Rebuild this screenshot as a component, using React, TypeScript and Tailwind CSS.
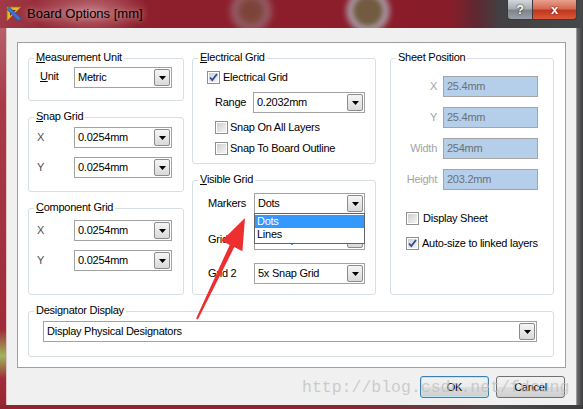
import React from "react";

function Tri() {
  return (
    <svg width="7" height="4" viewBox="0 0 7 4">
      <path d="M0 0H7L3.5 4Z" fill="#000" />
    </svg>
  );
}

function Combo({ value, className }: { value: string; className?: string }) {
  return (
    <div className={`flex h-[21px] items-stretch border border-[#a3a3a3] bg-white ${className ?? ""}`}>
      <div className="flex flex-1 items-center overflow-hidden whitespace-nowrap pl-[3px]">{value}</div>
      <div className="m-[1px] flex w-[16px] items-center justify-center rounded-[2px] border border-[#8c8c8c] bg-[linear-gradient(180deg,#f6f6f6,#d9d9d9)]">
        <Tri />
      </div>
    </div>
  );
}

function Check({ checked }: { checked?: boolean }) {
  return (
    <div className="flex h-[13px] w-[13px] shrink-0 items-center justify-center border border-[#8e8f8f] bg-white">
      <div className="relative h-[9px] w-[9px] bg-[linear-gradient(135deg,#cfcfcf,#f4f4f4)]">
        {checked && (
          <svg className="absolute left-[-1px] top-[-1px]" width="11" height="11" viewBox="0 0 11 11">
            <path d="M2 5.5L4.3 8L9 2" fill="none" stroke="#2b4c9c" strokeWidth="1.8" />
          </svg>
        )}
      </div>
    </div>
  );
}

function Group({
  title,
  className,
  children,
}: {
  title: React.ReactNode;
  className?: string;
  children?: React.ReactNode;
}) {
  return (
    <div className={`relative rounded-[3px] border border-[#d5dfe5] ${className ?? ""}`}>
      <div className="absolute left-[5px] top-[-8px] whitespace-nowrap bg-white px-[2px] leading-[13px]">{title}</div>
      {children}
    </div>
  );
}

function SheetRow({ label, value, className }: { label: string; value: string; className?: string }) {
  return (
    <div className={`flex items-center ${className ?? ""}`}>
      <div className="w-[46px] text-right text-[#a3a3a3]">{label}</div>
      <div className="ml-[6px] flex h-[21px] w-[95px] items-center border border-[#a5a5a5] bg-[#b5cfea] pl-[3px] text-[#6b6f75]">
        {value}
      </div>
    </div>
  );
}

export default function App() {
  return (
    <div className="relative h-[409px] w-[583px] overflow-hidden bg-[#8d1f2c] font-['Liberation_Sans',Arial,sans-serif] text-[11px] tracking-[-0.25px] text-black">
      {/* Title bar */}
      <div className="relative flex h-[28px] items-center overflow-hidden bg-[linear-gradient(90deg,#a03a46_0%,#93263383_12%,#8d1f2c_30%,#8c1d2a_60%,#891c29_77%,#5c2a31_82%,#414143_86%,#47484a_100%)]">
        <div className="absolute left-[30px] top-[-14px] h-[50px] w-[120px] rounded-full bg-[radial-gradient(closest-side,rgba(230,180,185,0.55),rgba(230,180,185,0))]" />
        <div className="absolute left-[228px] top-[-12px] h-[46px] w-[46px] rounded-full bg-[radial-gradient(closest-side,#6e6a48_50%,#a9b7c6_72%,rgba(169,183,198,0)_100%)] opacity-50 blur-[3px]" />
        <div className="absolute left-[343px] top-[-14px] h-[50px] w-[50px] rounded-full bg-[radial-gradient(closest-side,#6d6b46_50%,#b3c2d0_70%,rgba(179,194,208,0)_100%)] opacity-80 blur-[2px]" />
        <svg className="relative ml-[6px] shrink-0" width="16" height="16" viewBox="0 0 16 16">
          <path d="M1 1H15L1 15Z" fill="#e8b923" stroke="#9a6d10" strokeWidth="0.8" />
          <path d="M4 4H10L4 10Z" fill="#8d1f2c" />
          <path d="M1 3.5L3.5 1L15 12.5L12.5 15Z" fill="#3a77d0" stroke="#1f4c96" strokeWidth="0.6" />
        </svg>
        <span className="relative ml-[5px] text-[13px] tracking-normal [text-shadow:0_0_6px_rgba(255,255,255,0.6)]">
          Board Options [mm]
        </span>
        <div className="relative ml-auto mr-[6px] flex self-start">
          <div className="flex h-[20px] w-[26px] items-center justify-center rounded-bl-[4px] border border-t-0 border-[#3a3a3a] bg-[linear-gradient(180deg,#d4d8dc_0%,#a7adb3_45%,#7d848b_55%,#9aa1a8_100%)] text-[12px] font-bold text-white [text-shadow:0_0_2px_#000]">
            ?
          </div>
          <div className="flex h-[20px] w-[44px] items-center justify-center rounded-br-[4px] border border-l-0 border-t-0 border-[#3a3a3a] bg-[linear-gradient(180deg,#e8a08e_0%,#d66a52_45%,#c0381f_55%,#d9583a_100%)] text-[13px] font-bold text-white [text-shadow:0_0_2px_#300]">
            x
          </div>
        </div>
      </div>

      {/* Body row */}
      <div className="flex h-[377px]">
        <div className="w-[6px] bg-[linear-gradient(180deg,#b8606b_0%,#a83a47_20%,#a02b39_80%,#9fb45c_87%,#a02b39_93%,#9a2634_100%)]" />
        <div className="flex flex-1 flex-col border-l border-[#d8c8c8] bg-[#f0f0f0] pl-[10px] pr-[10px] pt-[14px]">
          {/* Panel */}
          <div className="h-[326px] border border-[#a0a0a0] bg-white pl-[10px] pt-[15px]">
            <div className="flex items-start">
              {/* Left column */}
              <div className="flex w-[156px] flex-col">
                <Group
                  className="h-[43px]"
                  title={
                    <>
                      <u>M</u>easurement Unit
                    </>
                  }
                >
                  <div className="flex items-center pl-[11px] pt-[8px]">
                    <div className="w-[34px] pb-[2px]">
                      <u>U</u>nit
                    </div>
                    <Combo value="Metric" className="w-[98px]" />
                  </div>
                </Group>
                <Group
                  className="mt-[16px] h-[75px]"
                  title={
                    <>
                      <u>S</u>nap Grid
                    </>
                  }
                >
                  <div className="flex items-center pl-[8px] pt-[9px]">
                    <div className="w-[37px] text-[#505050]">X</div>
                    <Combo value="0.0254mm" className="w-[98px]" />
                  </div>
                  <div className="mt-[9px] flex items-center pl-[8px]">
                    <div className="w-[37px] text-[#505050]">Y</div>
                    <Combo value="0.0254mm" className="w-[98px]" />
                  </div>
                </Group>
                <Group
                  className="mt-[16px] h-[87px]"
                  title={
                    <>
                      <u>C</u>omponent Grid
                    </>
                  }
                >
                  <div className="flex items-center pl-[8px] pt-[11px]">
                    <div className="w-[37px] text-[#505050]">X</div>
                    <Combo value="0.0254mm" className="w-[98px]" />
                  </div>
                  <div className="mt-[9px] flex items-center pl-[8px]">
                    <div className="w-[37px] text-[#505050]">Y</div>
                    <Combo value="0.0254mm" className="w-[98px]" />
                  </div>
                </Group>
              </div>

              {/* Middle column */}
              <div className="ml-[8px] flex w-[184px] flex-col">
                <Group
                  className="flex h-[106px] flex-col"
                  title={
                    <>
                      <u>E</u>lectrical Grid
                    </>
                  }
                >
                  <div className="ml-[14px] mt-[12px] flex h-[13px] items-center gap-[3px]">
                    <Check checked />
                    <span>Electrical Grid</span>
                  </div>
                  <div className="ml-[22px] mt-[8px] flex items-center">
                    <div className="w-[38px]">Range</div>
                    <Combo value="0.2032mm" className="w-[112px]" />
                  </div>
                  <div className="ml-[22px] mt-[8px] flex h-[13px] items-center gap-[2px]">
                    <Check />
                    <span>Snap On All Layers</span>
                  </div>
                  <div className="ml-[22px] mt-[8px] flex h-[13px] items-center gap-[2px]">
                    <Check />
                    <span>Snap To Board Outline</span>
                  </div>
                </Group>
                <Group
                  className="mt-[16px] flex h-[115px] flex-col"
                  title={
                    <>
                      <u>V</u>isible Grid
                    </>
                  }
                >
                  <div className="ml-[15px] mt-[12px] flex items-center">
                    <div className="w-[46px]">Markers</div>
                    <Combo value="Dots" className="w-[111px]" />
                  </div>
                  <div className="ml-[15px] mt-[15px] flex items-center">
                    <div className="w-[46px]">Grid 1</div>
                    <Combo value="1x Snap Grid" className="w-[111px]" />
                  </div>
                  <div className="ml-[15px] mt-[13px] flex items-center">
                    <div className="w-[46px]">Grid 2</div>
                    <Combo value="5x Snap Grid" className="w-[111px]" />
                  </div>
                </Group>
              </div>

              {/* Right column */}
              <Group className="ml-[14px] flex h-[237px] w-[164px] flex-col pt-[17px]" title="Sheet Position">
                <SheetRow label="X" value="25.4mm" />
                <SheetRow label="Y" value="25.4mm" className="mt-[10px]" />
                <SheetRow label="Width" value="254mm" className="mt-[10px]" />
                <SheetRow label="Height" value="203.2mm" className="mt-[10px]" />
                <div className="ml-[15px] mt-[22px] flex h-[13px] items-center gap-[4px]">
                  <Check />
                  <span>Display Sheet</span>
                </div>
                <div className="ml-[15px] mt-[12px] flex h-[13px] items-center gap-[3px]">
                  <Check checked />
                  <span>Auto-size to linked layers</span>
                </div>
              </Group>
            </div>

            {/* Designator display */}
            <Group className="mt-[16px] h-[46px] w-[526px] pl-[14px] pt-[9px]" title="Designator Display">
              <Combo value="Display Physical Designators" className="w-[494px]" />
            </Group>
          </div>

          {/* Buttons */}
          <div className="mt-[8px] flex justify-end gap-[7px] pr-[1px]">
            <div className="flex h-[22px] w-[69px] items-center justify-center rounded-[3px] border border-[#3c7fb1] bg-[linear-gradient(180deg,#f2f2f2_0%,#ebebeb_50%,#dddddd_51%,#cfcfcf_100%)] shadow-[inset_0_0_0_1px_#b9e6fb]">
              OK
            </div>
            <div className="flex h-[22px] w-[69px] items-center justify-center rounded-[3px] border border-[#707070] bg-[linear-gradient(180deg,#f2f2f2_0%,#ebebeb_50%,#dddddd_51%,#cfcfcf_100%)]">
              Cancel
            </div>
          </div>
        </div>
        <div className="w-[7px] border-l border-[#9a9a9a] bg-[linear-gradient(90deg,#6a6a6c,#3e3e40)]" />
      </div>
      <div className="h-[4px] bg-[linear-gradient(90deg,#8f2431_0%,#8a2532_60%,#4a4a4c_85%,#3c3c3e_100%)]" />

      {/* Dropdown list overlay */}
      <div className="absolute left-[254px] top-[213px] flex h-[31px] w-[111px] flex-col border border-[#646464] bg-white pt-[1px] text-[11px]">
        <div className="flex h-[13px] items-center bg-[#3399ff] pl-[2px] text-white">Dots</div>
        <div className="flex h-[13px] items-center pl-[2px]">Lines</div>
      </div>

      {/* Red arrow */}
      <svg className="pointer-events-none absolute left-0 top-0" width="583" height="409" viewBox="0 0 583 409">
        <polygon
          points="196.1,318.6 197.9,319.4 234.3,247.1 242.4,251.2 245,218 221.8,240.8 229.7,244.9"
          fill="#ee2f2f"
        />
      </svg>

      {/* Watermark */}
      <div className="pointer-events-none absolute left-[302px] top-[378px] font-['Liberation_Mono',monospace] text-[16.5px] leading-[20px] tracking-normal text-[rgba(190,190,190,0.75)]">
        http://blog.csdn.net/fdcung
      </div>
    </div>
  );
}
